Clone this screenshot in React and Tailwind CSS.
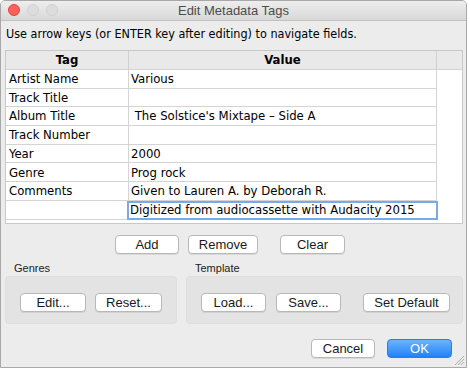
const rows = [
  ["Artist Name", "Various"],
  ["Track Title", ""],
  ["Album Title", "\u00a0The Solstice's Mixtape \u2013 Side A"],
  ["Track Number", ""],
  ["Year", "2000"],
  ["Genre", "Prog rock"],
  ["Comments", "Given to Lauren A. by Deborah R."],
];

function MacButton({ children, className = "" }) {
  return (
    <button
      className={`h-[19px] rounded-[4px] border border-[#b8b8b8] bg-white text-[13px] leading-none text-[#1a1a1a] shadow-[0_1px_0_rgba(0,0,0,0.08)] ${className}`}
      style={{ fontFamily: "'Liberation Sans', Arial, sans-serif" }}
    >
      {children}
    </button>
  );
}

function Group({ label, children, className = "" }) {
  return (
    <div className={`flex flex-col ${className}`}>
      <div
        className="ml-[9px] h-[17px] pt-[3px] text-[11px] leading-[13px] text-[#222]"
        style={{ fontFamily: "'Liberation Sans', Arial, sans-serif" }}
      >
        {label}
      </div>
      <div className="flex h-[48px] items-start rounded-[4px] border border-[#dedede] bg-[#e3e3e3] pt-[16px]">
        {children}
      </div>
    </div>
  );
}

export default function App() {
  return (
    <div className="h-[370px] w-[470px] bg-white">
      <div
        className="flex h-[368px] w-[467px] flex-col overflow-hidden rounded-t-[5px] border border-[#a8a8a8] bg-[#ececec]"
        style={{ fontFamily: "'DejaVu Sans Condensed', 'DejaVu Sans', Verdana, sans-serif" }}
      >
        {/* title bar */}
        <div className="relative flex h-[20px] shrink-0 items-center justify-center border-b border-[#c2c2c2] bg-gradient-to-b from-[#eeeeee] to-[#d8d8d8]">
          <div className="absolute left-[7px] top-[3px] flex gap-[7px]">
            <span className="h-[12px] w-[12px] rounded-full border border-[#e0443e] bg-[#fc605c]" />
            <span className="h-[12px] w-[12px] rounded-full border border-[#d0d0d0] bg-[#dddddd]" />
            <span className="h-[12px] w-[12px] rounded-full border border-[#d0d0d0] bg-[#dddddd]" />
          </div>
          <span
            className="text-[13px] text-[#4d4d4d]"
            style={{ fontFamily: "'Liberation Sans', Arial, sans-serif" }}
          >
            Edit Metadata Tags
          </span>
        </div>

        {/* instruction */}
        <div className="ml-[5px] mt-[5px] h-[24px] text-[12.5px] leading-[16px] text-black">
          Use arrow keys (or ENTER key after editing) to navigate fields.
        </div>

        {/* table */}
        <div className="ml-[4px] flex h-[174px] w-[458px] flex-col border border-[#c8c8c8] bg-white text-[13px] text-black">
          <div className="flex h-[19px] shrink-0 border-b border-[#d4d4d4] bg-[#e9e9e9] font-bold">
            <div className="flex w-[123px] items-center justify-center border-r border-[#d0d0d0]">Tag</div>
            <div className="flex w-[308px] items-center justify-center border-r border-[#d0d0d0]">Value</div>
            <div className="flex-1" />
          </div>
          {rows.map(([tag, value]) => (
            <div key={tag} className="flex h-[18.7px] shrink-0">
              <div className="flex w-[123px] items-center border-b border-r border-[#d4d4d4] pl-[3px]">{tag}</div>
              <div className="flex w-[308px] items-center whitespace-pre border-b border-r border-[#d4d4d4] pl-[2px]">{value}</div>
            </div>
          ))}
          <div className="flex h-[18.7px] shrink-0">
            <div className="w-[121px] border-b border-[#d4d4d4]" />
            <div className="flex w-[311px] items-center border-2 border-[#7aaae6] bg-white pl-[1px]">
              Digitized from audiocassette with Audacity 2015
            </div>
          </div>
        </div>

        {/* add / remove / clear */}
        <div className="ml-[114px] mt-[11px] flex gap-[9px]">
          <MacButton className="w-[64px]">Add</MacButton>
          <MacButton className="w-[70px]">Remove</MacButton>
          <MacButton className="ml-[13px] w-[65px]">Clear</MacButton>
        </div>

        {/* groups */}
        <div className="ml-[4px] mt-[5px] flex gap-[9px]">
          <Group label="Genres" className="w-[172px]">
            <MacButton className="ml-[14px] w-[66px]">Edit...</MacButton>
            <MacButton className="ml-[9px] w-[67px]">Reset...</MacButton>
          </Group>
          <Group label="Template" className="w-[277px]">
            <MacButton className="ml-[14px] w-[65px]">Load...</MacButton>
            <MacButton className="ml-[10px] w-[65px]">Save...</MacButton>
            <MacButton className="ml-[22px] w-[87px]">Set Default</MacButton>
          </Group>
        </div>

        {/* cancel / ok */}
        <div className="mt-[15px] flex justify-end gap-[12px] pr-[14px]">
          <MacButton className="w-[64px]">Cancel</MacButton>
          <button
            className="h-[19px] w-[65px] rounded-[4px] border border-[#2a7fe0] bg-gradient-to-b from-[#6cb3fa] to-[#1a82fb] text-[13px] leading-none text-white"
            style={{ fontFamily: "'Liberation Sans', Arial, sans-serif" }}
          >
            OK
          </button>
        </div>
        <div className="relative flex-1">
          <svg className="absolute bottom-[1px] right-[1px]" width="10" height="10" viewBox="0 0 10 10">
            <path d="M9 3L3 9M9 6L6 9M9 0L0 9" stroke="#9a9a9a" strokeWidth="0.8" />
          </svg>
        </div>
      </div>
    </div>
  );
}
